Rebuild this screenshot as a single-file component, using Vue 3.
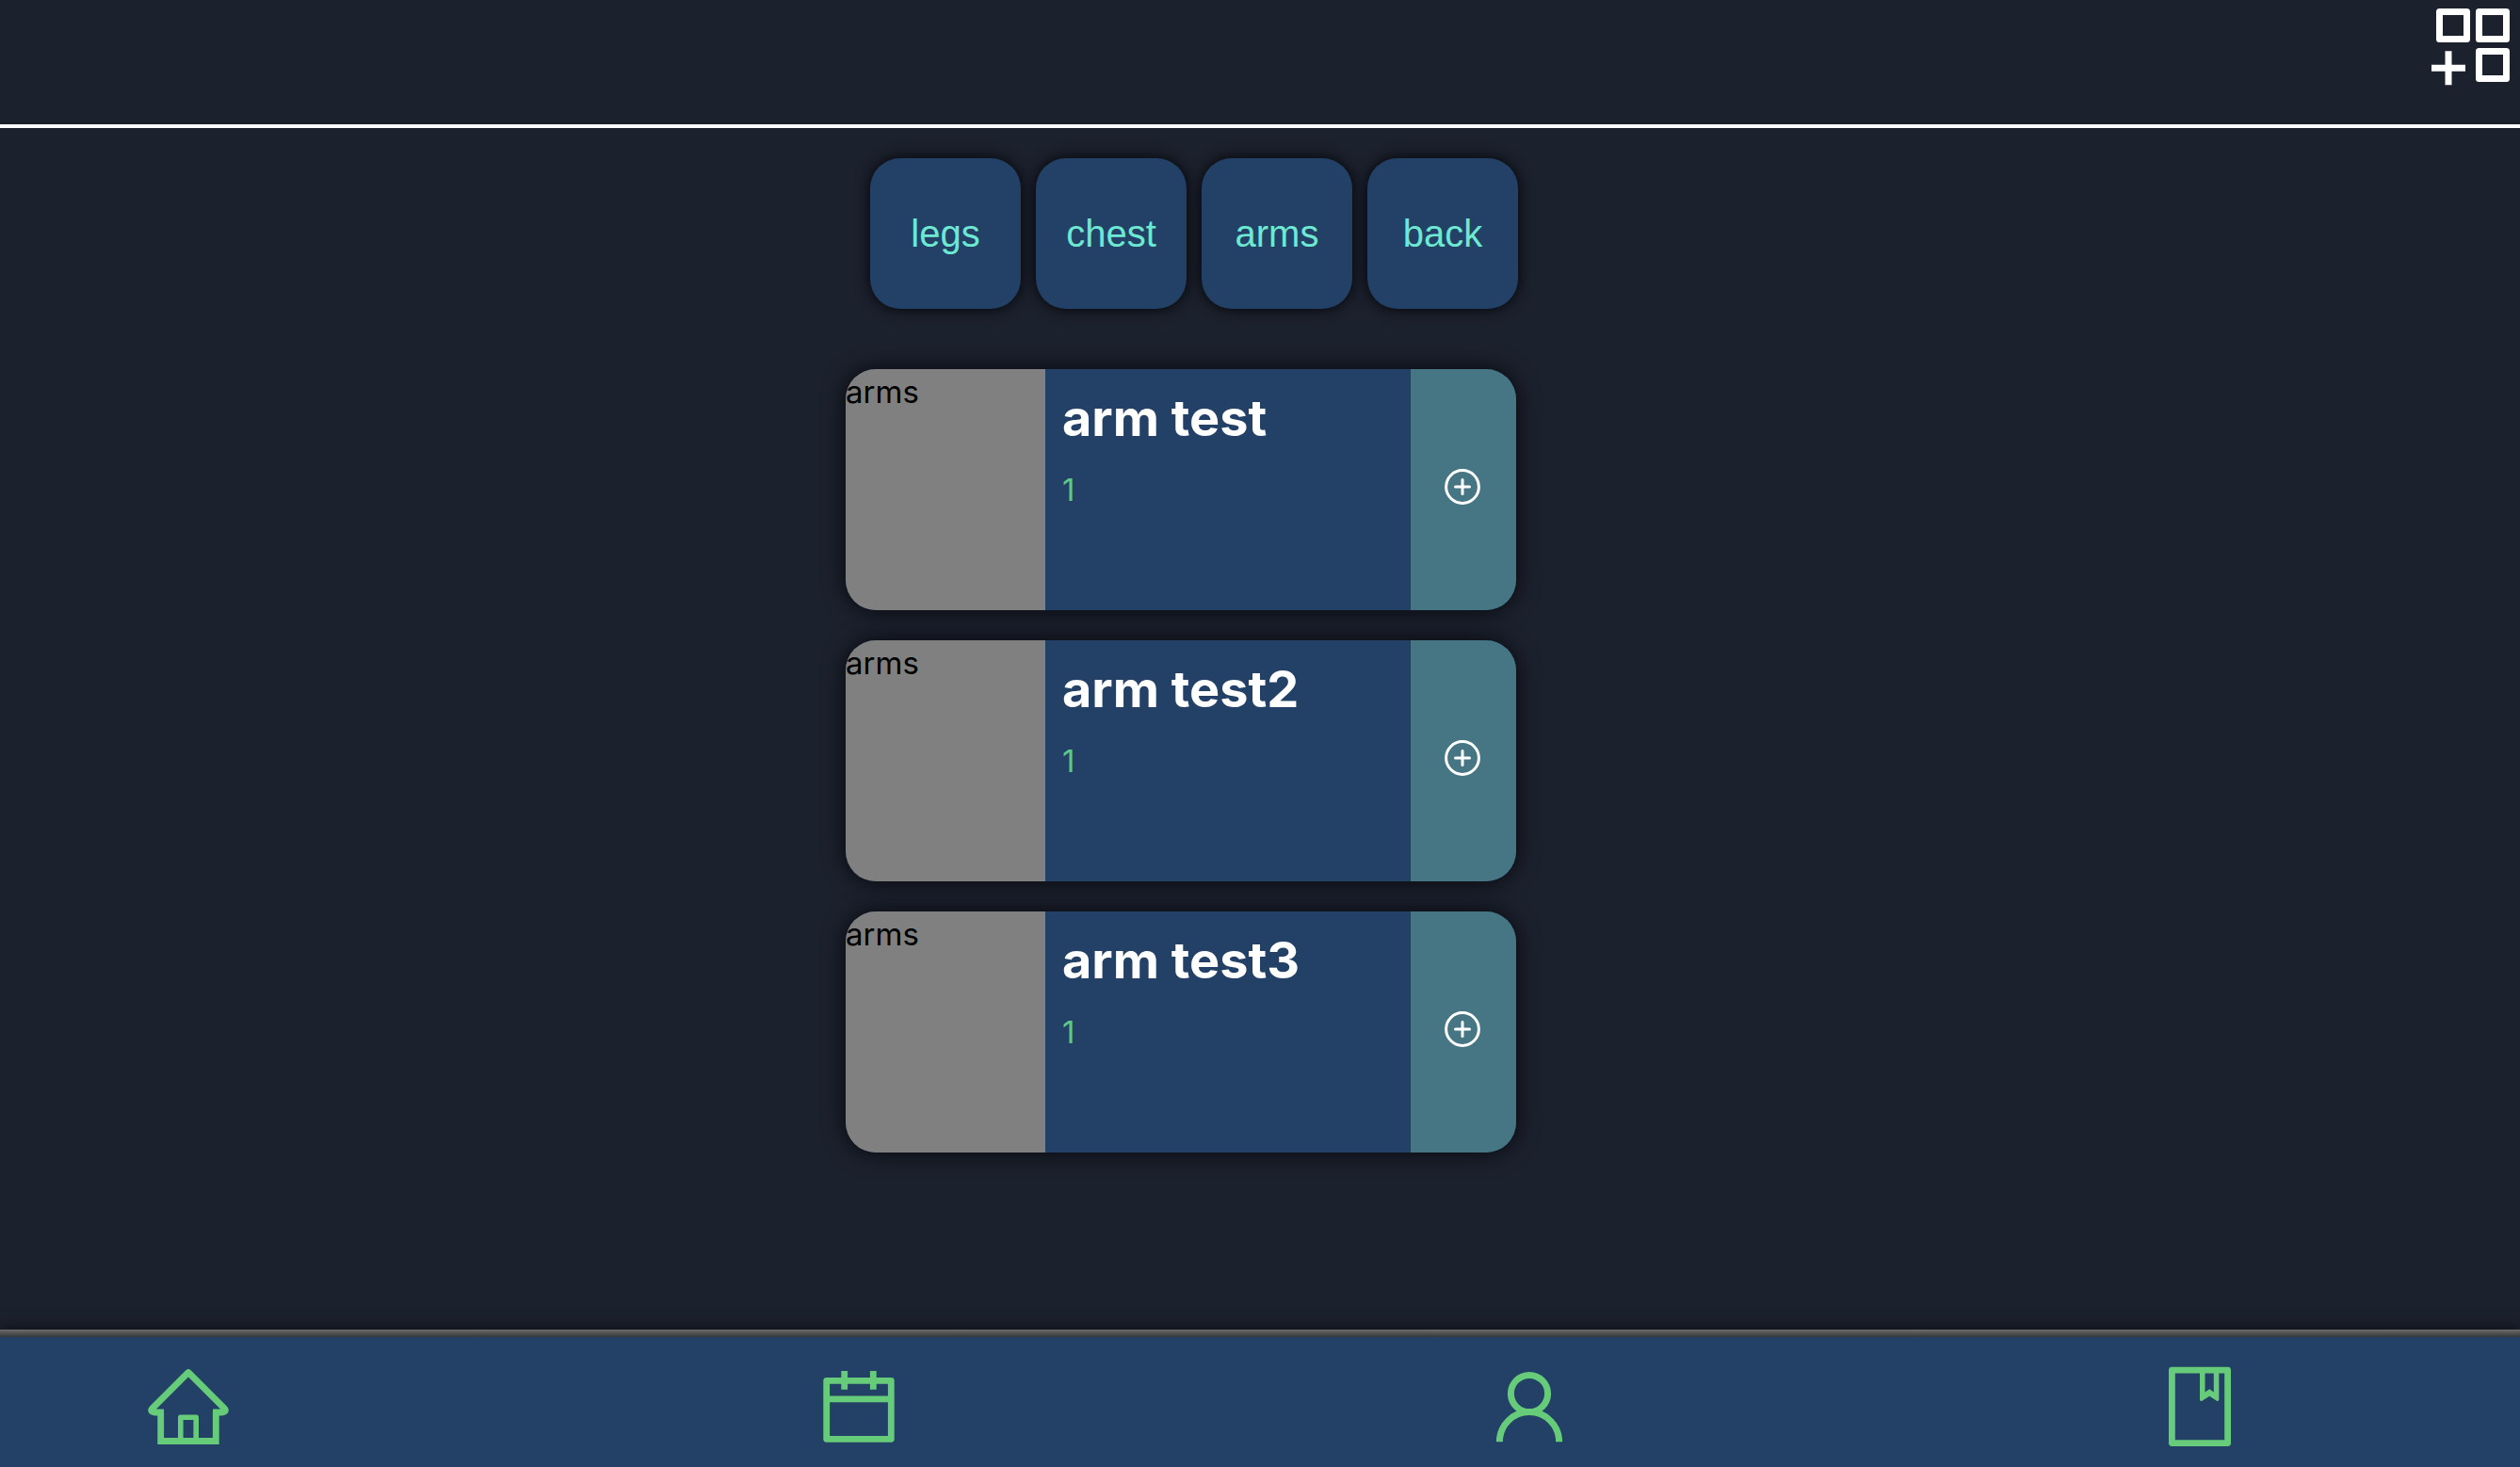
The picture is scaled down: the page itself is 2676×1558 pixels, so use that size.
<script setup>
import { ref } from 'vue'

const groups = ['legs', 'chest', 'arms', 'back']
const selected = ref('arms')

const exercises = [
  { name: 'arm test', group: 'arms', count: 1 },
  { name: 'arm test2', group: 'arms', count: 1 },
  { name: 'arm test3', group: 'arms', count: 1 },
]
</script>

<template>
  <div class="page">
    <header class="topbar">
      <button class="icon-button" type="button" aria-label="Add widget">
        <svg width="84" height="84" viewBox="0 0 84 84" fill="none" stroke="#fff" stroke-width="7" stroke-linejoin="round">
          <rect x="9.5" y="4.5" width="29" height="29" />
          <rect x="51.5" y="4.5" width="29" height="29" />
          <rect x="51.5" y="46.5" width="29" height="29" />
          <path d="M1 64.3H37M19 46.3V82.3" />
        </svg>
      </button>
    </header>

    <main class="content">
      <div class="filters">
        <button
          v-for="group in groups"
          :key="group"
          class="filter"
          type="button"
          @click="selected = group"
        >{{ group }}</button>
      </div>

      <ul class="cards">
        <li v-for="exercise in exercises" :key="exercise.name" class="card">
          <div class="thumb">{{ exercise.group }}</div>
          <div class="details">
            <h2 class="name">{{ exercise.name }}</h2>
            <p class="count">{{ exercise.count }}</p>
          </div>
          <button class="add" type="button" :aria-label="`Add ${exercise.name}`">
            <svg width="38" height="38" viewBox="0 0 38 38" fill="none" stroke="#fff" stroke-width="3" stroke-linecap="round">
              <circle cx="19" cy="19" r="17.4" />
              <path d="M11.5 19H26.5M19 11.5V26.5" />
            </svg>
          </button>
        </li>
      </ul>
    </main>

    <nav class="tabs">
      <a class="tab" href="#home" aria-label="Home">
        <svg width="88" height="96" viewBox="0 0 88 96" fill="none" stroke="currentColor" stroke-width="6.8" stroke-linejoin="round">
          <path stroke-linejoin="miter" d="M14.7 59V89.5H73.3V59" />
          <path d="M18 59H8Q2.500 58 6 54.500L44 16.500L82 54.500Q85.500 58 80 59H70" />
          <path stroke-width="5.6" d="M35.800 89V64.300H52.200V89" />
        </svg>
      </a>
      <a class="tab" href="#calendar" aria-label="Calendar">
        <svg width="88" height="96" viewBox="0 0 88 96" fill="none" stroke="currentColor" stroke-width="6.8" stroke-linejoin="round">
          <rect x="9.7" y="25.3" width="68.6" height="62" />
          <path d="M10 44.800H78M28.700 15V34.700M59.300 15V34.700" />
        </svg>
      </a>
      <a class="tab" href="#profile" aria-label="Profile">
        <svg width="88" height="96" viewBox="0 0 88 96" fill="none" stroke="currentColor" stroke-width="7">
          <circle cx="44" cy="39" r="19.6" />
          <path d="M12.400 90.200A31.600 31.600 0 0 1 75.600 90.200" />
        </svg>
      </a>
      <a class="tab" href="#journal" aria-label="Journal">
        <svg width="88" height="96" viewBox="0 0 88 96" fill="none" stroke="currentColor" stroke-width="6.8" stroke-linejoin="round">
          <rect x="14.4" y="14.2" width="59.2" height="77.4" />
          <path fill="currentColor" stroke="none" d="M44 14H49.500V37.500L54.300 34.300L58.800 37.500V14H64.300V45.500Q64.300 47 62.300 47L54.300 41.700L46 47Q44 47 44 45.500Z" />
        </svg>
      </a>
    </nav>
  </div>
</template>

<style>
body {
  margin: 0;
  background: #1c212e;
}
</style>

<style scoped>
.page {
  display: flex;
  flex-direction: column;
  min-height: 100vh;
  background: #1c212e;
  color: #000;
  font-family: Inter, "Liberation Sans", sans-serif;
}

button {
  border: 0;
  padding: 0;
  font: inherit;
  cursor: pointer;
}

svg {
  display: block;
}

.topbar {
  display: flex;
  justify-content: flex-end;
  align-items: flex-start;
  box-sizing: border-box;
  height: 136px;
  padding: 8px 11px 0;
  border-bottom: 4px solid #fff;
}

.icon-button {
  background: none;
}

.content {
  flex: 1;
  box-sizing: border-box;
  width: 100%;
  max-width: 880px;
  margin: 0 auto;
  padding: 32px 0;
}

.filters {
  display: flex;
  gap: 16px;
  padding-left: 26px;
}

.filter {
  width: 160px;
  height: 160px;
  border-radius: 32px;
  background: #234166;
  box-shadow: 0 0 16px rgba(0, 0, 0, 0.9);
  color: #6de8d2;
  font-family: "Liberation Sans", Arial, sans-serif;
  font-size: 40px;
}

.cards {
  display: flex;
  flex-direction: column;
  gap: 32px;
  max-width: 712px;
  margin: 64px 0 0;
  padding: 0;
  list-style: none;
}

.card {
  display: flex;
  height: 256px;
  border-radius: 32px;
  overflow: hidden;
  background: #234166;
  box-shadow: 0 0 24px rgba(0, 0, 0, 0.8);
}

.thumb {
  width: 212px;
  background: #808080;
  font-size: 33px;
  line-height: 48px;
}

.details {
  flex: 1;
  padding: 20px 18px;
}

.name {
  margin: 0;
  color: #fff;
  font-size: 54px;
  line-height: 64px;
}

.count {
  margin: 20px 0 0;
  color: #5cc88c;
  font-size: 33px;
  line-height: 48px;
}

.add {
  display: flex;
  align-items: center;
  justify-content: center;
  width: 112px;
  padding: 0 2px 6px 0;
  background: #467684;
}

.tabs {
  display: flex;
  justify-content: space-between;
  align-items: center;
  box-sizing: border-box;
  height: 146px;
  padding: 8px 296px 0 156px;
  background:
    linear-gradient(#6c6c6c, #363636) top / 100% 8px no-repeat,
    #234166;
  box-shadow: 0 0 16px rgba(0, 0, 0, 0.7);
}

.tab {
  color: #66cc7a;
}
</style>
